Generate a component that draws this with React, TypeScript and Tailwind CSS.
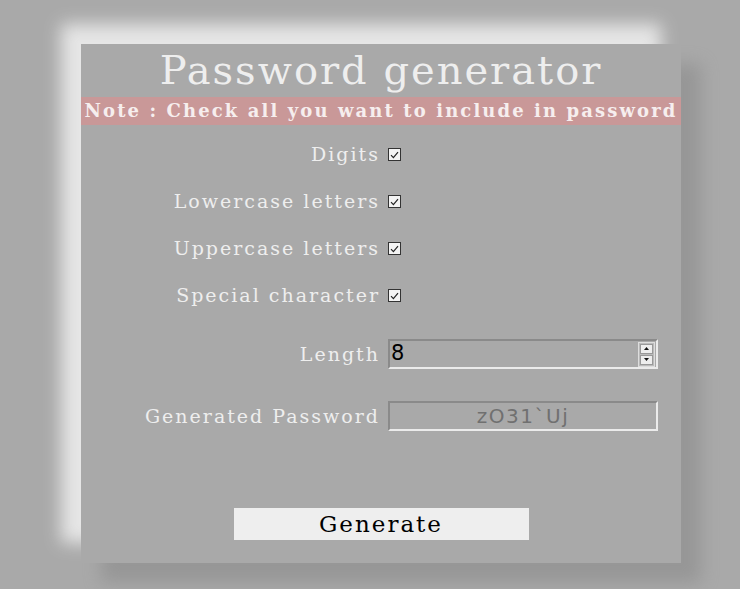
import { useState } from 'react';

const serif = { fontFamily: '"DejaVu Serif", "Liberation Serif", serif' };
const sans = { fontFamily: '"DejaVu Sans", "Liberation Sans", sans-serif' };

function CheckMark({ checked, onToggle }: { checked: boolean; onToggle: () => void }) {
	return (
		<button
			type="button"
			onClick={onToggle}
			className="w-[13px] h-[13px] border border-[#333] bg-[#f3f3f3] flex items-center justify-center"
		>
			{checked && (
				<svg width="9" height="8" viewBox="0 0 9 8" fill="none">
					<path d="M1 4.2 L3.4 6.6 L8 1.2" stroke="#222" strokeWidth="1.2" />
				</svg>
			)}
		</button>
	);
}

function Spinner() {
	return (
		<div className="flex flex-col gap-px border border-[#ddd] bg-[#bbb] p-px">
			<div className="w-[13px] h-[10px] bg-[#eee] border border-[#999] flex items-center justify-center">
				<svg width="5" height="3" viewBox="0 0 5 3">
					<path d="M0 3 L2.5 0 L5 3 Z" fill="#111" />
				</svg>
			</div>
			<div className="w-[13px] h-[10px] bg-[#eee] border border-[#999] flex items-center justify-center">
				<svg width="5" height="3" viewBox="0 0 5 3">
					<path d="M0 0 L2.5 3 L5 0 Z" fill="#111" />
				</svg>
			</div>
		</div>
	);
}

const options = ['Digits', 'Lowercase letters', 'Uppercase letters', 'Special character'];

export default function App() {
	const [checked, setChecked] = useState<boolean[]>([true, true, true, true]);

	return (
		<div className="min-h-[589px] bg-[#a9a9a9] pt-[44px] pl-[81px] overflow-hidden">
			<div
				className="w-[600px] h-[519px] bg-[#a9a9a9] flex flex-col shadow-[-20px_-20px_16px_#e6e6e6,20px_20px_16px_#979797]"
				style={serif}
			>
				<h1 className="text-center text-[40px] leading-[53px] tracking-[2px] text-[#eeeeee]">
					Password generator
				</h1>
				<div className="h-[28px] bg-[#c99898] text-center text-[18px] leading-[28px] font-bold tracking-[2.1px] text-[#f6eeee] whitespace-nowrap">
					Note : Check all you want to include in password
				</div>

				<div className="mt-[6px] flex flex-col">
					{options.map((label, i) => (
						<div key={label} className="h-[47px] grid grid-cols-[307px_1fr] items-center">
							<span className="text-right pr-[8px] text-[19px] tracking-[2px] text-[#eeeeee]">{label}</span>
							<CheckMark
								checked={checked[i]}
								onToggle={() => setChecked(checked.map((c, j) => (j === i ? !c : c)))}
							/>
						</div>
					))}
				</div>

				<div className="mt-[20px] grid grid-cols-[307px_1fr] items-center">
					<span className="text-right pr-[8px] text-[19px] tracking-[2px] text-[#eeeeee]">Length</span>
					<div className="w-[270px] h-[30px] border-2 border-t-[#8a8a8a] border-l-[#8a8a8a] border-b-[#ebebeb] border-r-[#ebebeb] flex items-center justify-between pl-[1px] pr-[1px]">
						<span className="text-[21px] text-black" style={sans}>8</span>
						<Spinner />
					</div>
				</div>

				<div className="mt-[32px] grid grid-cols-[307px_1fr] items-center">
					<span className="text-right pr-[8px] text-[19px] tracking-[2px] text-[#eeeeee]">Generated Password</span>
					<div
						className="w-[270px] h-[30px] border-2 border-t-[#8a8a8a] border-l-[#8a8a8a] border-b-[#ebebeb] border-r-[#ebebeb] flex items-center justify-center text-[20px] tracking-[1.5px] text-[#707070]"
						style={sans}
					>
						zO31`Uj
					</div>
				</div>

				<div className="mt-[77px] flex justify-center">
					<button className="w-[295px] h-[32px] bg-[#eeeeee] text-black text-[23px] leading-[32px] tracking-[2px]">
						Generate
					</button>
				</div>
			</div>
		</div>
	);
}
